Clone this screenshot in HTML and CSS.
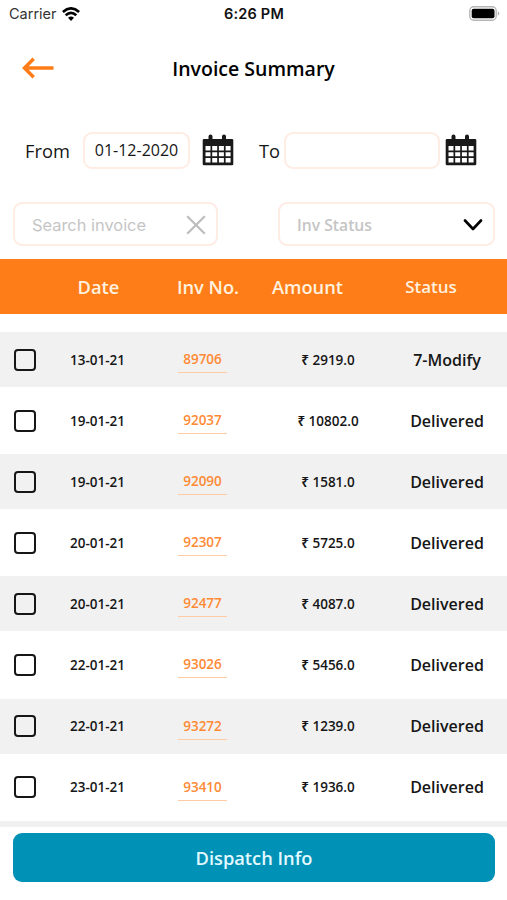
FILE: index.html
```html
<!DOCTYPE html>
<html lang="en">
<head>
<meta charset="utf-8">
<title>Invoice Summary</title>
<link rel="stylesheet" href="styles.css">
</head>
<body>
<svg width="0" height="0" class="sprite" aria-hidden="true">
  <symbol id="calendar" viewBox="0 0 32 32">
    <path fill="#191919" fill-rule="evenodd" d="M2 5H6.500V2.500a2 2 0 0 1 4 0V5H20V2.500a2 2 0 0 1 4 0V5H30a1.300 1.300 0 0 1 1.300 1.300V30a1.300 1.300 0 0 1-1.300 1.300H2A1.300 1.300 0 0 1 .7 30V6.300A1.300 1.300 0 0 1 2 5ZM3.500 12v4.500h5V12ZM10.200 12v4.500h5V12ZM16.900 12v4.500h5V12ZM23.600 12v4.500h5V12ZM3.500 18.200v4h5v-4ZM10.200 18.200v4h5v-4ZM16.900 18.200v4h5v-4ZM23.600 18.200v4h5v-4ZM3.500 24v4.500h5V24ZM10.200 24v4.500h5V24ZM16.900 24v4.500h5V24ZM23.600 24v4.500h5V24Z"/>
  </symbol>
</svg>
<div class="statusbar">
  <div class="carrier"><span>Carrier</span>
    <svg width="18" height="14" viewBox="0 0 18 14" fill="none" stroke="#000" stroke-width="2.700"><path d="M.9 5Q9-2.200 17.100 5M3.700 8.300Q9 3.400 14.300 8.300"/><path d="M9 13.900 6 10.800Q9 8 12 10.800Z" fill="#000" stroke="none"/></svg>
  </div>
  <div class="clock">6:26 PM</div>
  <svg class="battery" width="31" height="15" viewBox="0 0 31 15"><rect x=".8" y=".8" width="26.400" height="13.400" rx="4" fill="#fff" stroke="#b5b5b5" stroke-width="1.400"/><rect x="2.700" y="2.700" width="22.800" height="9.600" rx="2" fill="#000"/><path d="M28.800 5.200q3 2.300 0 4.600z" fill="#aaa"/></svg>
</div>
<header class="titlebar">
  <svg class="back" width="34" height="24" viewBox="0 0 34 24" fill="none" stroke="#ff7d19" stroke-width="3.500"><path d="M32.500 12H3.800M12.700 2.800 3.500 12l9.200 9.200"/></svg>
  <h1>Invoice Summary</h1>
</header>
<div class="dates">
  <span class="from">From</span><div class="field date">01-12-2020</div><svg class="cal" width="32" height="32"><use href="#calendar"/></svg>
  <span class="to">To</span><div class="field date empty"></div><svg class="cal2" width="32" height="32"><use href="#calendar"/></svg>
</div>
<div class="filters">
  <div class="field search"><span>Search invoice</span><svg width="20" height="20" viewBox="0 0 20 20" fill="none" stroke="#bdbdbd" stroke-width="2.200"><path d="M1.200 1.200 18.800 18.800M18.800 1.200 1.200 18.800"/></svg></div>
  <div class="field select"><span>Inv Status</span><svg width="20" height="12" viewBox="0 0 20 12" fill="none" stroke="#000" stroke-width="2.600" stroke-linecap="round" stroke-linejoin="round"><path d="M2 1.500 10 10 18 1.500"/></svg></div>
</div>
<div class="head"><span class="h-date">Date</span><span class="h-inv">Inv No.</span><span class="h-amount">Amount</span><span class="h-status">Status</span></div>
<main class="list">
  <div class="row"><i class="check"></i><span class="d">13-01-21</span><a class="inv">89706</a><span class="amt">₹ 2919.0</span><span class="st">7-Modify</span></div>
  <div class="row"><i class="check"></i><span class="d">19-01-21</span><a class="inv">92037</a><span class="amt">₹ 10802.0</span><span class="st">Delivered</span></div>
  <div class="row"><i class="check"></i><span class="d">19-01-21</span><a class="inv">92090</a><span class="amt">₹ 1581.0</span><span class="st">Delivered</span></div>
  <div class="row"><i class="check"></i><span class="d">20-01-21</span><a class="inv">92307</a><span class="amt">₹ 5725.0</span><span class="st">Delivered</span></div>
  <div class="row"><i class="check"></i><span class="d">20-01-21</span><a class="inv">92477</a><span class="amt">₹ 4087.0</span><span class="st">Delivered</span></div>
  <div class="row"><i class="check"></i><span class="d">22-01-21</span><a class="inv">93026</a><span class="amt">₹ 5456.0</span><span class="st">Delivered</span></div>
  <div class="row"><i class="check"></i><span class="d">22-01-21</span><a class="inv">93272</a><span class="amt">₹ 1239.0</span><span class="st">Delivered</span></div>
  <div class="row"><i class="check"></i><span class="d">23-01-21</span><a class="inv">93410</a><span class="amt">₹ 1936.0</span><span class="st">Delivered</span></div>
  <div class="row"></div>
</main>
<button class="dispatch">Dispatch Info</button>
</body>
</html>
```
FILE: styles.css
```css
* { box-sizing: border-box; }
body { margin: 0; width: 507px; height: 900px; overflow: hidden; background: #fff; color: #161616; font-family: "Open Sans", "Noto Sans", sans-serif; }
.sprite { display: block; }
svg { display: block; flex: none; }
.statusbar { display: grid; grid-template-columns: 1fr auto 1fr; align-items: center; height: 27px; padding: 0 7px 0 9px; font-family: Inter, sans-serif; }
.carrier { display: flex; align-items: center; gap: 5px; font-size: 14.500px; color: #333; }
.clock { font-weight: 600; font-size: 14.500px; letter-spacing: .2px; margin-left: -1px; color: #111; }
.battery { justify-self: end; }
.titlebar { display: grid; grid-template-columns: 56px 1fr 56px; align-items: center; height: 82px; }
.back { margin-left: 21px; }
h1 { margin: 0; padding-top: 2px; text-align: center; font-size: 19.500px; line-height: 26px; font-weight: 600; color: #000; }
.dates { display: flex; align-items: center; height: 38px; margin-top: 22px; padding-left: 25px; font-size: 18.300px; }
.from { width: 58px; }
.cal { margin-left: 12px; }
.to { width: 26px; margin-left: 25px; }
.cal2 { margin-left: 4px; }
.field { border: 2px solid #ffece2; border-radius: 9px; display: flex; align-items: center; }
.date { width: 107px; height: 37px; justify-content: center; font-size: 16px; }
.empty { width: 156px; margin-left: -1px; margin-right: 1px; }
.filters { display: flex; justify-content: space-between; margin-top: 33px; padding: 0 12px 0 13px; }
.search, .select { height: 44px; justify-content: space-between; padding: 1px 10px 0 17px; color: #c5c5c5; }
.search { width: 205px; font-family: Inter, sans-serif; font-size: 16.400px; }
.select { width: 217px; font-size: 15.700px; font-weight: 600; }
.head { display: grid; grid-template-columns: 97px 122px 77px 170px; align-items: center; height: 55px; margin-top: 13px; padding-left: 50px; background: #ff7d19; color: #fff1df; text-align: center; font-size: 18.300px; font-weight: 600; }
.h-status { font-size: 17px; }
.list { display: grid; grid-auto-rows: 55px; row-gap: 6.100px; height: 513px; padding-top: 18px; overflow: hidden; }
.row { display: grid; grid-template-columns: 50px 95px 115px 136px 102px; align-items: center; text-align: center; font-size: 13.500px; font-weight: 650; }
.row:nth-child(odd) { background: #f1f1f1; }
.check { width: 22px; height: 22px; margin-left: 14px; border: 2px solid #161616; border-radius: 4px; }
.inv { justify-self: center; width: 49px; height: 27px; line-height: 26px; border-bottom: 1px solid #ffcba5; color: #ff8a35; font-weight: 600; }
.st { font-size: 16px; font-weight: 600; }
.dispatch { display: block; width: 482px; height: 49px; margin: 6px 0 0 13px; padding: 0; border: 0; border-radius: 9px; background: #0091b7; color: #e2faff; font: 600 18.300px "Open Sans", sans-serif; }
```
